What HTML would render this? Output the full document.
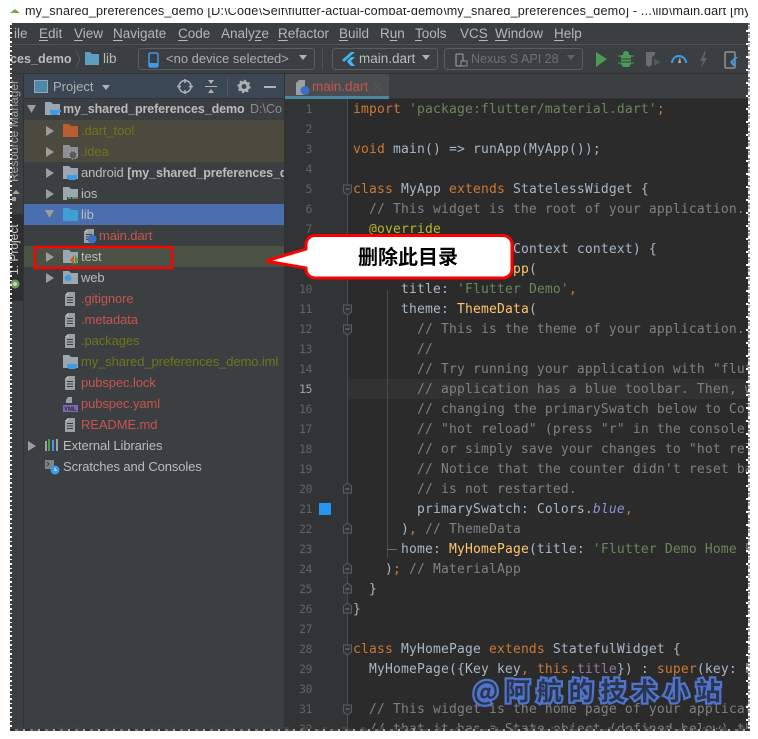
<!DOCTYPE html>
<html><head><meta charset="utf-8"><style>
html,body{margin:0;padding:0;background:#fff;width:758px;height:739px;overflow:hidden}
#w{position:absolute;left:0;top:0;width:758px;height:739px;overflow:hidden;font-family:"Liberation Sans","Noto Sans CJK SC",sans-serif}
.a{position:absolute}
.t{position:absolute;white-space:pre;line-height:20px;font-size:13.5px;color:#bbb}
.m{top:24px;font-size:13.5px;color:#b4b7b9}
.m u{text-decoration-thickness:1px;text-underline-offset:2px}
.r{position:absolute;left:24px;width:260px;height:21px}
.n{position:absolute;white-space:pre;font-size:13px;line-height:21px;color:#bbb;letter-spacing:-.1px}
.red{color:#c75450}.ol{color:#6f7518}
.c{position:absolute;left:6px;margin-top:1px;white-space:pre;font:13px/20px "DejaVu Sans Mono","Liberation Mono",monospace;letter-spacing:.17px;color:#a9b7c6}
.k{color:#cc7832}.s{color:#6a8759}.g{color:#808080}.y{color:#ffc66d}.p{color:#9876aa}.b{color:#bbb529}.i{font-style:italic;color:#8f8fd6}
.l{position:absolute;width:28px;left:284px;text-align:right;font:11.5px/20px "DejaVu Sans Mono",monospace;letter-spacing:-.4px;color:#606366}
</style></head><body><div id="w">

<!-- title bar -->
<div class="a" style="left:10px;top:8px;width:738px;height:15px;overflow:hidden;background:#fff">
<div class="t" style="left:15px;top:-7px;color:#222;font-size:12.6px;letter-spacing:.17px">my_shared_preferences_demo [D:\Code\Self\flutter-actual-combat-demo\my_shared_preferences_demo] - ...\lib\main.dart [my</div>
<svg class="a" style="left:0;top:0" width="16" height="8"><path d="M0 5 L5 1 L10 5Z" fill="#7aa648"/></svg>
</div>

<!-- window -->
<div class="a" style="left:10px;top:23px;width:738px;height:706px;background:#3c3f41;overflow:hidden">
<div class="a" style="left:0;top:21px;width:738px;height:1px;background:#515151"></div>
<div class="a" style="left:0;top:50px;width:738px;height:1px;background:#323232"></div>
</div>

<!-- menu -->
<div class="t m" style="left:14px">ile</div>
<div class="t m" style="left:39px"><u>E</u>dit</div>
<div class="t m" style="left:74px"><u>V</u>iew</div>
<div class="t m" style="left:113px"><u>N</u>avigate</div>
<div class="t m" style="left:178px"><u>C</u>ode</div>
<div class="t m" style="left:221px">Analy<u>z</u>e</div>
<div class="t m" style="left:278px"><u>R</u>efactor</div>
<div class="t m" style="left:339px"><u>B</u>uild</div>
<div class="t m" style="left:380px">R<u>u</u>n</div>
<div class="t m" style="left:415px"><u>T</u>ools</div>
<div class="t m" style="left:460px">VC<u>S</u></div>
<div class="t m" style="left:495px"><u>W</u>indow</div>
<div class="t m" style="left:554px"><u>H</u>elp</div>

<!-- toolbar -->
<div class="t" style="left:10px;top:49px;font-weight:bold;color:#bbb;font-size:12.6px">ces_demo</div>
<div class="t" style="left:103px;top:49px;color:#bbb">lib</div>
<svg class="a" style="left:0;top:44px" width="758" height="30">
<path d="M76 7l4 8-4 8" fill="none" stroke="#55585a"/>
<path d="M85 8h5l2 2h7v11H85z" fill="#5d9fc0"/>
<rect x="138.500" y="4.500" width="176" height="21" rx="3" fill="none" stroke="#5a5d5f"/>
<rect x="149" y="9" width="9" height="14" rx="1.500" fill="none" stroke="#3d9be9" stroke-width="1.500"/><rect x="149" y="19" width="9" height="4" fill="#3d9be9"/>
<path d="M299 11h8l-4 5z" fill="#afb1b3"/>
<rect x="322" y="4" width="1" height="22" fill="#515151"/>
<rect x="332.500" y="4.500" width="105" height="21" rx="3" fill="none" stroke="#5a5d5f"/>
<path d="M351 8l-9 8 2 2 11-10z" fill="#3fb6ef"/><path d="M347 17l4-4h4l-4 4 4 5h-4l-3-3z" fill="#3fb6ef"/>
<path d="M422 11h8l-4 5z" fill="#afb1b3"/>
<rect x="444.500" y="4.500" width="138" height="21" rx="3" fill="none" stroke="#5a5d5f"/>
<rect x="456" y="10" width="7" height="12" rx="1" fill="none" stroke="#8e9092" stroke-width="1.300"/><rect x="461" y="17" width="6" height="5" fill="#3c3f41" stroke="#8e9092"/>
<path d="M567 11h8l-4 5z" fill="#606263"/>
<path d="M596 8l11 7-11 8z" fill="#499c54"/>
<path d="M621 11h10v9l-2 3h-6l-2-3z" fill="#499c54"/><circle cx="626" cy="10" r="3" fill="#499c54"/><path d="M621 15h10M621 18h10" stroke="#3c3f41" stroke-width="1"/><path d="M618 12h3M631 12h3M618 19h3M631 19h3" stroke="#499c54"/>
<path d="M646 8h9v3l-3 2v8l-3 2-3-2z" fill="#6a6c6e"/><path d="M654 14l6 4-6 4z" fill="#55585a"/>
<path d="M672 19a7 7 0 0 1 14 0" fill="none" stroke="#3d9be9" stroke-width="2"/><path d="M678 19l2-6 1 6z" fill="#afb1b3"/>
<path d="M705 7l-5 10h3l-2 7 6-10h-3l2-7z" fill="#606263"/>
<rect x="725" y="8" width="10" height="16" rx="1" fill="none" stroke="#8e9092" stroke-width="1.500"/><path d="M738 13l-5 5 3 4h-3l-3-4 5-5z" fill="#3d9be9"/>
</svg>
<div class="t" style="left:166px;top:49px;color:#adb0b2;font-size:13px">&lt;no device selected&gt;</div>
<div class="t" style="left:359px;top:49px;color:#bbb">main.dart</div>
<div class="t" style="left:471px;top:49px;color:#6e7072;font-size:12.5px">Nexus S API 28</div>

<!-- left strip -->
<div class="a" style="left:23px;top:74px;width:1px;height:655px;background:#323232"></div>
<div class="a" style="left:10px;top:214px;width:13px;height:87px;background:#2d2f30"></div>
<div class="t" style="left:16px;top:182px;font-size:12px;color:#a0a2a4;transform-origin:0 0;transform:rotate(-90deg) translateY(-9px);line-height:14px">Resource Manager</div>
<div class="t" style="left:16px;top:275px;font-size:12px;color:#ccc;transform-origin:0 0;transform:rotate(-90deg) translateY(-9px);line-height:14px">1: Project</div>
<svg class="a" style="left:8px;top:185px" width="16" height="120">
<path d="M4 9l4-4 4 4zM4 12h4v4H4z" fill="#a0a2a4"/><circle cx="7" cy="99" r="4.500" fill="#6a9e55"/><circle cx="7" cy="99" r="2" fill="#ccc"/></svg>

<!-- project header -->
<div class="a" style="left:24px;top:74px;width:260px;height:24px;background:#3b4754"></div>
<div class="a" style="left:24px;top:98px;width:260px;height:1px;background:#323232"></div>
<svg class="a" style="left:0;top:74px" width="290" height="25">
<rect x="34.500" y="6.500" width="13" height="12" fill="#4c89a8" stroke="#9aa7b0"/>
<path d="M102 11h8l-4 5z" fill="#afb1b3"/>
<circle cx="185" cy="12.500" r="6" fill="none" stroke="#afb1b3" stroke-width="1.500"/><path d="M185 5v4M185 16v4M177 12.500h4M189 12.500h4" stroke="#afb1b3" stroke-width="1.500"/>
<path d="M205 12.500h12" stroke="#afb1b3"/><path d="M208 6h6l-3 4zM208 19h6l-3-4z" fill="#afb1b3"/>
<rect x="227" y="3" width="1" height="19" fill="#4d5762"/>
<circle cx="244" cy="12.500" r="4" fill="none" stroke="#afb1b3" stroke-width="3"/><circle cx="244" cy="12.500" r="6" fill="none" stroke="#afb1b3" stroke-width="1.500" stroke-dasharray="2 2.700"/>
<rect x="264" y="12" width="12" height="2" fill="#afb1b3"/>
</svg>
<div class="t" style="left:53px;top:77px;color:#afb1b3;font-size:13px">Project</div>

<!-- tree -->
<div class="r" style="top:120px;height:42px;background:#4c4a3f"></div>
<div class="r" style="top:204px;background:#4b6eaf"></div>
<div class="r" style="top:246px;background:#4a5245"></div>
<div class="a" style="left:24px;top:99px;width:260px;height:21px;background:#3c3f41"></div>

<svg class="a" style="left:0;top:0;overflow:visible" width="284" height="480">
<defs>
<path id="f" d="M0 0h6l2 2h7v11H0z"/>
<path id="ar" d="M0 0l8 5-8 5z"/>
<g id="doc"><path d="M3 0h3v12H0V3z M6 0h4v14H0v-2h6z" fill="#9aa0a4" /><path d="M2 5.500h6M2 8h6M2 10.500h6" stroke="#3c3f41"/><path d="M0 3l3-3v3z" fill="#c2c6c9"/></g>
</defs>
<path d="M27 105h9l-4.500 8z" fill="#9a9c9e"/>
<use href="#f" x="45" y="102" fill="#9aa7b0"/><path d="M50 110h9v3l-2 2h-5l-2-2z" fill="#3d9be9"/><path d="M59 110h2v2h-2z" fill="#3d9be9"/>
<use href="#ar" x="46" y="126" fill="#9a9c9e"/><use href="#f" x="63" y="124" fill="#b85e30"/>
<use href="#ar" x="46" y="147" fill="#9a9c9e"/><use href="#f" x="63" y="145" fill="#8d9195"/><circle cx="73" cy="155" r="4" fill="#5a5d5f" stroke="#bbb" stroke-dasharray="1.500 1.500"/>
<use href="#ar" x="46" y="168" fill="#9a9c9e"/><use href="#f" x="63" y="166" fill="#9aa7b0"/><path d="M67 175h10v3l-2 2h-6l-2-2z" fill="#3d9be9"/>
<use href="#ar" x="46" y="189" fill="#9a9c9e"/><use href="#f" x="63" y="187" fill="#9aa7b0"/><rect x="67" y="197" width="11" height="3" fill="#3c3f41"/><path d="M68 198h3M72 198h3" stroke="#499c54" stroke-width="2"/><path d="M75 198h3" stroke="#c75450" stroke-width="2"/>
<path d="M45 210h9l-4.500 8z" fill="#9a9c9e"/><use href="#f" x="63" y="208" fill="#3e9fd4"/>
<use href="#doc" x="84" y="229"/><circle cx="92" cy="239" r="4.500" fill="#3b70c4"/>
<use href="#ar" x="46" y="252" fill="#9a9c9e"/><use href="#f" x="63" y="250" fill="#9aa7b0"/><path d="M74 255l-4 5 4 5z" fill="#d05a2c"/><path d="M75 255l3.500 5-3.500 5z" fill="#4f9c3c"/>
<use href="#ar" x="46" y="273" fill="#9a9c9e"/><use href="#f" x="63" y="271" fill="#9aa7b0"/><ellipse cx="68" cy="278" rx="3.500" ry="3" fill="#3d9be9"/>
<use href="#doc" x="65" y="292"/><use href="#doc" x="65" y="313"/><use href="#doc" x="65" y="334"/>
<use href="#f" x="63" y="355" fill="#9aa7b0"/><path d="M67 364h10v3l-2 2h-6l-2-2z" fill="#3d9be9"/>
<use href="#doc" x="65" y="376"/>
<path d="M68 397h4v6h-6v-3z" fill="#9aa0a4"/><rect x="63" y="405" width="15" height="7" fill="#7c6cb8"/><text x="64" y="411" font-family="Liberation Sans" font-size="6" font-weight="bold" fill="#2b2b2b">YML</text>
<use href="#doc" x="65" y="418"/>
<use href="#ar" x="28" y="441" fill="#9a9c9e"/>
<path d="M46 441v10" stroke="#9aa0a4" stroke-width="2"/><path d="M49 439v12" stroke="#499c54" stroke-width="2"/><path d="M53 440v11" stroke="#3d9be9" stroke-width="2"/><path d="M57 439v12" stroke="#9aa0a4" stroke-width="2"/>
<path d="M45 460h9v9h-9z" fill="#7f8589"/><path d="M47 462l2 2-2 2" fill="none" stroke="#3c3f41"/><circle cx="55" cy="470" r="4.500" fill="#3d9be9"/><path d="M55 467.500v3h2" fill="none" stroke="#fff" stroke-width=".8"/>
</svg>

<div class="n" style="left:63px;top:99px;font-weight:bold;font-size:12.5px">my_shared_preferences_demo</div>
<div class="n" style="left:250px;top:99px;color:#8c8c8c;font-size:12.5px;letter-spacing:0">D:\Co</div>
<div class="n ol" style="left:81px;top:120px">.dart_tool</div>
<div class="n ol" style="left:81px;top:141px">.idea</div>
<div style="position:absolute;left:0;top:162px;width:284px;height:21px;overflow:hidden"><div class="n" style="left:81px;top:0">android <b style="font-size:12.5px">[my_shared_preferences_demo]</b></div></div>
<div class="n" style="left:81px;top:183px">ios</div>
<div class="n" style="left:81px;top:204px">lib</div>
<div class="n red" style="left:99px;top:225px">main.dart</div>
<div class="n" style="left:81px;top:246px">test</div>
<div class="n" style="left:81px;top:267px">web</div>
<div class="n red" style="left:81px;top:288px">.gitignore</div>
<div class="n red" style="left:81px;top:309px">.metadata</div>
<div class="n ol" style="left:81px;top:330px">.packages</div>
<div class="n ol" style="left:81px;top:351px">my_shared_preferences_demo.iml</div>
<div class="n red" style="left:81px;top:372px">pubspec.lock</div>
<div class="n red" style="left:81px;top:393px">pubspec.yaml</div>
<div class="n red" style="left:81px;top:414px">README.md</div>
<div class="n" style="left:63px;top:435px">External Libraries</div>
<div class="n" style="left:63px;top:456px">Scratches and Consoles</div>

<!-- editor tabs -->
<div class="a" style="left:284px;top:74px;width:1px;height:655px;background:#323232"></div>
<div class="a" style="left:285px;top:74px;width:104px;height:22px;background:#4a4d4f"></div>
<div class="a" style="left:285px;top:96px;width:104px;height:3px;background:#4a88a0"></div>
<div class="a" style="left:389px;top:98px;width:359px;height:1px;background:#323232"></div>
<svg class="a" style="left:295px;top:78px" width="20" height="18"><path d="M4 2h6v15H1V5z" fill="#9aa0a4"/><circle cx="10" cy="12.500" r="4.500" fill="#3b70c4"/></svg>
<div class="t" style="left:312px;top:77px;color:#c75450">main.dart</div>
<svg class="a" style="left:373px;top:82px" width="10" height="10"><path d="M1 1l7 7M8 1l-7 7" stroke="#55585a"/></svg>

<!-- gutter + editor -->
<div class="a" style="left:285px;top:99px;width:62px;height:630px;background:#313335"></div>
<div class="a" style="left:347px;top:99px;width:401px;height:630px;background:#2b2b2b;overflow:hidden" id="ed">
<div class="a" style="left:0;top:280px;width:401px;height:20px;background:#323232"></div>
<div class="a" style="left:40px;top:191px;width:1px;height:268px;background:#4a4a4a"></div>
<div class="a" style="left:40px;top:450px;width:10px;height:1px;background:#6a6a6a"></div>
<div class="c" style="top:0"><span class="k">import</span> <span class="s">'package:flutter/material.dart'</span><span class="k">;</span></div>
<div class="c" style="top:40px"><span class="k">void</span> main() =&gt; runApp(MyApp());</div>
<div class="c" style="top:80px"><span class="k">class</span> MyApp <span class="k">extends</span> StatelessWidget {</div>
<div class="c g" style="top:100px">  // This widget is the root of your application.</div>
<div class="c b" style="top:120px">  @override</div>
<div class="c" style="top:140px">  Widget <span class="y">build</span>(BuildContext context) {</div>
<div class="c" style="top:160px">    <span class="k">return</span> <span class="y">MaterialApp</span>(</div>
<div class="c" style="top:180px">      title: <span class="s">'Flutter Demo'</span><span class="k">,</span></div>
<div class="c" style="top:200px">      theme: <span class="y">ThemeData</span>(</div>
<div class="c g" style="top:220px">        // This is the theme of your application.</div>
<div class="c g" style="top:240px">        //</div>
<div class="c g" style="top:260px">        // Try running your application with "flutter run". You'll see the</div>
<div class="c g" style="top:280px">        // application has a blue toolbar. Then, without quitting the app, try</div>
<div class="c g" style="top:300px">        // changing the primarySwatch below to Colors.green and then invoke</div>
<div class="c g" style="top:320px">        // "hot reload" (press "r" in the console where you ran "flutter run",</div>
<div class="c g" style="top:340px">        // or simply save your changes to "hot reload" in a Flutter IDE).</div>
<div class="c g" style="top:360px">        // Notice that the counter didn't reset back to zero; the application</div>
<div class="c g" style="top:380px">        // is not restarted.</div>
<div class="c" style="top:400px">        primarySwatch: Colors.<span class="i">blue</span><span class="k">,</span></div>
<div class="c" style="top:420px">      )<span class="k">,</span> <span class="g">// ThemeData</span></div>
<div class="c" style="top:440px">      home: <span class="y">MyHomePage</span>(title: <span class="s">'Flutter Demo Home Page'</span>),</div>
<div class="c" style="top:460px">    )<span class="k">;</span> <span class="g">// MaterialApp</span></div>
<div class="c" style="top:480px">  }</div>
<div class="c" style="top:500px">}</div>
<div class="c" style="top:540px"><span class="k">class</span> MyHomePage <span class="k">extends</span> StatefulWidget {</div>
<div class="c" style="top:560px">  MyHomePage({Key key<span class="k">,</span> <span class="k">this</span>.<span class="p">title</span>}) : <span class="k">super</span>(key: key);</div>
<div class="c g" style="top:600px">  // This widget is the home page of your application. It is stateful,</div>
<div class="c g" style="top:620px">  // that it has a State object (defined below) that contains fields</div>
</div>

<div class="l" style="top:99px">1</div><div class="l" style="top:119px">2</div><div class="l" style="top:139px">3</div><div class="l" style="top:159px">4</div><div class="l" style="top:179px">5</div><div class="l" style="top:199px">6</div><div class="l" style="top:219px">7</div><div class="l" style="top:239px">8</div><div class="l" style="top:259px">9</div><div class="l" style="top:279px">10</div><div class="l" style="top:299px">11</div><div class="l" style="top:319px">12</div><div class="l" style="top:339px">13</div><div class="l" style="top:359px">14</div><div class="l" style="top:379px;color:#a4a3a3">15</div><div class="l" style="top:399px">16</div><div class="l" style="top:419px">17</div><div class="l" style="top:439px">18</div><div class="l" style="top:459px">19</div><div class="l" style="top:479px">20</div><div class="l" style="top:499px">21</div><div class="l" style="top:519px">22</div><div class="l" style="top:539px">23</div><div class="l" style="top:559px">24</div><div class="l" style="top:579px">25</div><div class="l" style="top:599px">26</div><div class="l" style="top:619px">27</div><div class="l" style="top:639px">28</div><div class="l" style="top:659px">29</div><div class="l" style="top:679px">30</div><div class="l" style="top:699px">31</div><div class="l" style="top:719px;height:10px;overflow:hidden">32</div>

<svg class="a" style="left:285px;top:99px" width="70" height="630">
<defs><g id="fo"><path d="M-4 -4h8v7l-4 3-4-3z" fill="#313335" stroke="#5a5d5f"/><path d="M-2 0h4" stroke="#7a7d7f"/></g>
<g id="fc"><path d="M-4 5h8v-7l-4-3-4 3z" fill="#313335" stroke="#5a5d5f"/><path d="M-2 1h4" stroke="#7a7d7f"/></g></defs>
<path d="M62.500 0V630" stroke="#4a4c4e"/>
<rect x="34" y="404" width="12" height="12" fill="#2196f3"/>
<use href="#fo" x="62.500" y="90"/><use href="#fo" x="62.500" y="150"/><use href="#fo" x="62.500" y="210"/><use href="#fo" x="62.500" y="230"/>
<use href="#fc" x="62.500" y="389"/><use href="#fc" x="62.500" y="429"/><use href="#fc" x="62.500" y="469"/><use href="#fc" x="62.500" y="489"/><use href="#fc" x="62.500" y="509"/>
<use href="#fo" x="62.500" y="550"/><use href="#fo" x="62.500" y="610"/>
</svg>

<!-- red box + callout -->
<svg class="a" style="left:0;top:0" width="758" height="739">
<rect x="35" y="247" width="137" height="21" fill="none" stroke="#f00" stroke-width="2.500"/>
<path d="M315 235.500H503a9 9 0 0 1 9 9V269a9 9 0 0 1-9 9H315a9 9 0 0 1-9-9V268L266 261L306 249V244.500a9 9 0 0 1 9-9z" fill="#fff" stroke="#f00" stroke-width="3"/>
</svg>
<div class="a" style="left:358px;top:242px;width:104px;font-size:20px;line-height:28px;font-weight:bold;color:#000;white-space:pre;font-family:'Noto Sans CJK SC',sans-serif">删除此目录</div>

<!-- watermark -->
<div class="a" style="left:473px;top:674px;font-family:'Noto Sans CJK SC',sans-serif;font-size:25px;line-height:32px;font-weight:bold;letter-spacing:6.800px;white-space:pre;color:#2b3550;-webkit-text-stroke:4.500px #4f74c9;paint-order:stroke fill">@阿航的技术小站</div>

<!-- torn edges -->
<div class="a" style="left:748px;top:23px;width:2px;height:706px;background:repeating-linear-gradient(180deg,#777 0 2px,#fff 2px 3px,#aaa 3px 6px,#fff 6px 9px)"></div>
<div class="a" style="left:746px;top:23px;width:2px;height:706px;background:repeating-linear-gradient(180deg,transparent 0 7px,#fff 7px 9px,transparent 9px 13px)"></div>
<div class="a" style="left:10px;top:23px;width:2px;height:706px;background:repeating-linear-gradient(180deg,#fff 0 2px,transparent 2px 5px,#fff 5px 6px,transparent 6px 9px)"></div>
<div class="a" style="left:10px;top:729px;width:740px;height:2px;background:repeating-linear-gradient(90deg,#333 0 5px,#777 5px 8px,#444 8px 13px,#aaa 13px 15px)"></div>
<div class="a" style="left:10px;top:727px;width:740px;height:2px;background:repeating-linear-gradient(90deg,transparent 0 9px,#444 9px 13px,transparent 13px 19px)"></div>
</div></body></html>
